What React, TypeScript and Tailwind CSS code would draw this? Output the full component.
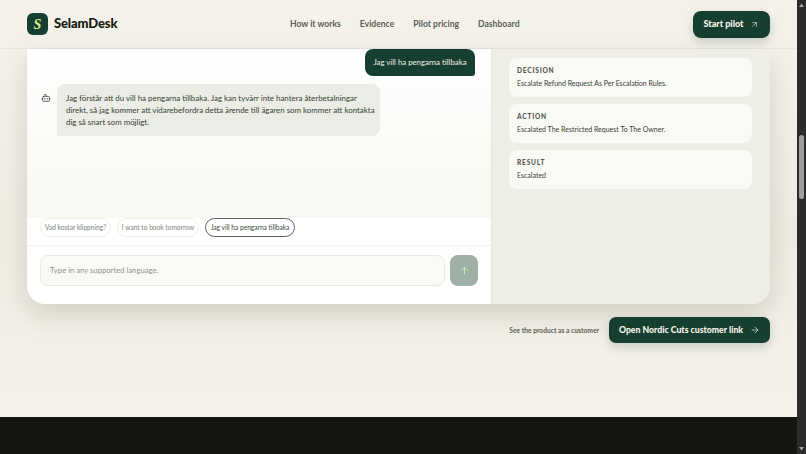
import { ArrowRight, ArrowUp, ArrowUpRight, Bot } from "lucide-react";

function InfoCard({ label, value }: { label: string; value: string }) {
  return (
    <div className="flex h-[39px] flex-col rounded-[8px] bg-[#f9f9f5] pl-[8px] pt-[8px]">
      <div className="text-[6.6px] font-black leading-[9px] tracking-[0.12em] text-[#55594f]">{label}</div>
      <div className="mt-[3px] text-[7px] leading-[11px] text-[#383d36]">{value}</div>
    </div>
  );
}

function Chip({ text, width, active }: { text: string; width: string; active?: boolean }) {
  return (
    <div
      className={
        active
          ? `flex h-[19px] items-center justify-center rounded-full border border-[#55665c] bg-white text-[6.6px] text-[#3b463f] ${width}`
          : `flex h-[19px] items-center justify-center rounded-full border border-[#eeeee8] bg-white text-[6.6px] text-[#7b7f78] ${width}`
      }
    >
      {text}
    </div>
  );
}

export default function App() {
  return (
    <div className="flex h-[454px] w-[806px] overflow-hidden bg-[#f4f1e9] font-['Lato',sans-serif]">
      <div className="flex w-[797px] flex-col overflow-hidden">
        <header className="flex h-[49px] shrink-0 items-center border-b border-[#e8e6de] bg-[#f4f1ea] pl-[27px] pr-[27px]">
          <div className="flex w-[263px] items-center gap-[6px]">
            <div className="flex h-[22px] w-[21px] items-center justify-center rounded-[6px] bg-[#173f31] font-['Liberation_Serif',serif] text-[14px] font-bold italic text-[#d6f08a]">
              S
            </div>
            <span className="text-[13px] font-black tracking-[-0.01em] text-[#14180f]">SelamDesk</span>
          </div>
          <nav className="flex gap-[19px] text-[8.6px] font-bold text-[#5a5e55]">
            <span>How it works</span>
            <span>Evidence</span>
            <span>Pilot pricing</span>
            <span>Dashboard</span>
          </nav>
          <div className="ml-auto flex h-[27px] w-[77px] items-center justify-center gap-[7px] rounded-[8px] bg-[#173f31] text-[9px] font-black text-[#f6f4ec] shadow-[0_4px_10px_rgba(23,63,49,0.2)]">
            Start pilot
            <ArrowUpRight size={9} strokeWidth={1.6} />
          </div>
        </header>

        <div className="h-[368px] shrink-0 bg-gradient-to-b from-[#f4f1ea] via-[#eeebe2] to-[#f5f2ea] px-[27px]">
          <section className="flex h-[255px] overflow-hidden rounded-b-[18px] bg-white shadow-[0_10px_26px_rgba(70,70,50,0.18)]">
            <div className="flex w-[465px] flex-col border-r border-[#e6e5dd]">
              <div className="flex h-[169px] flex-col bg-gradient-to-b from-white to-[#f8f7f1] pl-[14px] pr-[16px]">
                <div className="flex justify-end">
                  <div className="flex h-[27px] w-[110px] items-center justify-center rounded-[8px] rounded-br-[3px] bg-[#173f31] text-[7.8px] text-[#eef0e6]">
                    Jag vill ha pengarna tillbaka
                  </div>
                </div>
                <div className="mt-[8px] flex">
                  <Bot size={10} strokeWidth={1.8} className="mt-[9px] text-[#2b4236]" />
                  <div className="ml-[6px] h-[52px] w-[323px] whitespace-nowrap rounded-[8px] rounded-bl-none bg-[#eaece5] py-[8px] pl-[9px] text-[7.9px] leading-[12.2px] text-[#383d36]">
                    Jag förstår att du vill ha pengarna tillbaka. Jag kan tyvärr inte hantera återbetalningar
                    <br />
                    direkt, så jag kommer att vidarebefordra detta ärende till ägaren som kommer att kontakta
                    <br />
                    dig så snart som möjligt.
                  </div>
                </div>
              </div>
              <div className="flex h-[28px] items-start gap-[6px] border-b border-[#f1f1ec] pl-[13px]">
                <Chip text="Vad kostar klippning?" width="w-[71px]" />
                <Chip text="I want to book tomorrow" width="w-[82px]" />
                <Chip text="Jag vill ha pengarna tillbaka" width="w-[90px]" active />
              </div>
              <div className="flex gap-[5px] pl-[13px] pr-[13px] pt-[9px]">
                <div className="flex h-[31px] flex-1 items-center rounded-[8px] border border-[#e9e9e1] bg-[#f9f9f5] pl-[9px] text-[7.7px] text-[#8f938b]">
                  Type in any supported language.
                </div>
                <div className="flex h-[31px] w-[28px] items-center justify-center rounded-[8px] bg-[#9fb0a7] text-[#dcefb4]">
                  <ArrowUp size={11} strokeWidth={1.8} />
                </div>
              </div>
            </div>
            <aside className="flex flex-1 flex-col gap-[7px] bg-[#eeeee7] pl-[17px] pr-[18px] pt-[9px]">
              <InfoCard label="DECISION" value="Escalate Refund Request As Per Escalation Rules." />
              <InfoCard label="ACTION" value="Escalated The Restricted Request To The Owner." />
              <InfoCard label="RESULT" value="Escalated" />
            </aside>
          </section>
          <div className="mt-[13px] flex items-center justify-end gap-[10px]">
            <span className="text-[6.7px] font-bold text-[#5c6056]">See the product as a customer</span>
            <div className="flex h-[26px] w-[161px] items-center justify-center gap-[7px] rounded-[7px] bg-[#173f31] text-[8.7px] font-black text-[#f6f4ec] shadow-[0_4px_10px_rgba(23,63,49,0.2)]">
              <span className="whitespace-nowrap">Open Nordic Cuts customer link</span>
              <ArrowRight size={10} strokeWidth={1.6} />
            </div>
          </div>
        </div>
        <footer className="flex-1 bg-[#141711]" />
      </div>
      <div className="flex w-[9px] flex-col items-center bg-[#2b2b2b]">
        <svg width="7" height="7" viewBox="0 0 7 7" className="mt-[2px]"><path d="M3.5 1.5 6 5H1z" fill="#a3a3a3" /></svg>
        <div className="mt-[126px] h-[64px] w-[5px] rounded-full bg-[#9f9f9f]" />
        <svg width="7" height="7" viewBox="0 0 7 7" className="mb-[2px] mt-auto"><path d="M1 2h5L3.5 5.5z" fill="#a3a3a3" /></svg>
      </div>
    </div>
  );
}
